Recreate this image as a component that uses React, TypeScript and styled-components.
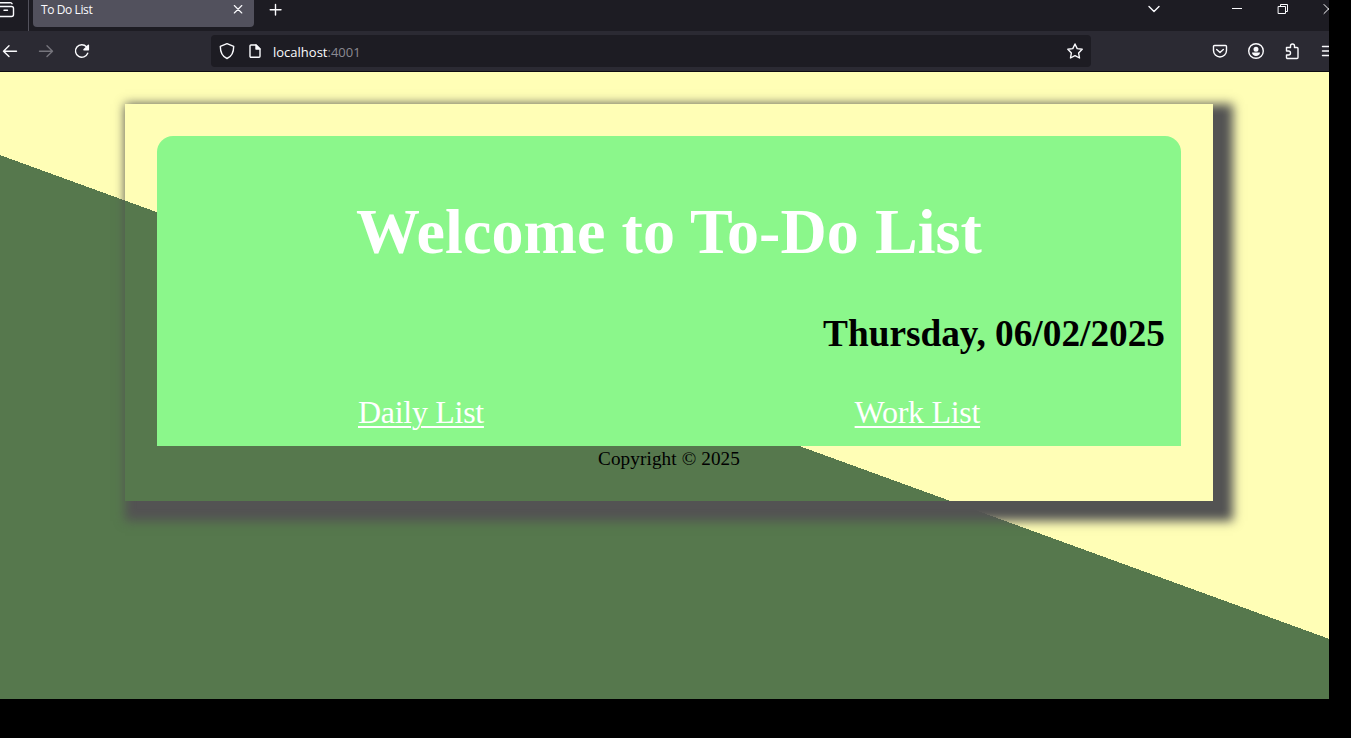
import React from "react";
import styled, { createGlobalStyle } from "styled-components";

const GlobalStyle = createGlobalStyle`
  * { box-sizing: border-box; }
  html, body { margin: 0; padding: 0; background: #000; overflow: hidden; }
`;

const Screen = styled.div`
  width: 1351px;
  height: 738px;
  background: #000;
  overflow: hidden;
`;

const Browser = styled.div`
  width: 1329px;
  height: 699px;
  display: flex;
  flex-direction: column;
  overflow: hidden;
`;

const TabBar = styled.div`
  height: 31px;
  flex: none;
  display: flex;
  align-items: flex-start;
  background: #1d1c23;
`;

const LibraryButton = styled.div`
  width: 29px;
  height: 31px;
  border-right: 1px solid #53525c;
  overflow: hidden;
`;

const Tab = styled.div`
  margin-left: 4px;
  width: 221px;
  height: 27px;
  padding: 0 9px 0 8px;
  display: flex;
  justify-content: space-between;
  background: #52515d;
  border-radius: 0 0 4px 4px;
`;

const TabTitle = styled.span`
  font: 12px/20px "Open Sans", "Noto Sans", sans-serif;
  letter-spacing: -0.4px;
  color: #fbfbfe;
`;

const Controls = styled.div`
  margin-left: auto;
  margin-right: -1px;
  display: flex;
`;

const Glyph = styled.svg<{ $ml?: number; $faded?: boolean }>`
  flex: none;
  display: block;
  margin-left: ${(p) => p.$ml ?? 0}px;
  fill: none;
  stroke: ${(p) => (p.$faded ? "#76757d" : "#fbfbfe")};
  stroke-width: 1.4;
  stroke-linecap: round;
  stroke-linejoin: round;
`;

const NavBar = styled.div`
  height: 41px;
  flex: none;
  display: flex;
  align-items: center;
  background: #2b2a33;
  border-bottom: 1px solid #0d0c11;
`;

const AddressBar = styled.div`
  width: 880px;
  height: 32px;
  flex: none;
  margin-left: 120px;
  display: flex;
  align-items: center;
  background: #1d1c23;
  border-radius: 4px;
`;

const Address = styled.span`
  margin-left: 9px;
  width: 793px;
  font: 13px/20px "Open Sans", "Noto Sans", sans-serif;
  padding-top: 2px;
  color: #fbfbfe;
`;

const Port = styled.span`
  color: #8b8a92;
`;

const Page = styled.main`
  flex: 1;
  padding: 32px 116px 0 125px;
  background: linear-gradient(20deg, #56784d 48.97%, #fffeb6 48.97%);
  font-family: "Liberation Serif", "Times New Roman", serif;
`;

const Card = styled.section`
  height: 397px;
  padding: 32px;
  box-shadow: 10px 10px 10px 10px #535353;
`;

const Panel = styled.div`
  height: 310px;
  padding: 59px 16px 0;
  background: #8bf78b;
  border-radius: 16px 16px 0 0;
`;

const Title = styled.h1`
  margin: 0;
  font-size: 64px;
  line-height: 74px;
  letter-spacing: 0.1px;
  text-align: center;
  white-space: nowrap;
  color: #fff;
`;

const Today = styled.h2`
  margin: 44px 0 0;
  font-size: 37.3px;
  line-height: 42px;
  text-align: right;
  color: #000;
`;

const Links = styled.nav`
  margin-top: 39px;
  padding: 0 185px;
  display: flex;
  justify-content: space-between;
`;

const ListLink = styled.a`
  font-size: 32px;
  line-height: 36px;
  letter-spacing: -0.3px;
  color: #fff;
  text-decoration: underline;
  text-decoration-thickness: 2px;
  text-underline-offset: 3px;
`;

const Copyright = styled.footer`
  font-size: 19.2px;
  line-height: 25px;
  letter-spacing: 0.1px;
  text-align: center;
  color: #000;
`;

export default function App() {
  return (
    <Screen>
      <GlobalStyle />
      <Browser>
        <TabBar>
          <LibraryButton>
            <Glyph width="16" height="20" viewBox="0 0 16 20">
              <path d="M-2 6.500H11.500a2 2 0 0 1 2 2V14.500a2 2 0 0 1-2 2H-2M-2 2.700H9.500a2.500 2.500 0 0 1 2.500 1M4 10.200H7.500" />
            </Glyph>
          </LibraryButton>
          <Tab>
            <TabTitle>To Do List</TabTitle>
            <Glyph width="14" height="20" viewBox="0 0 14 20">
              <path style={{ strokeWidth: 1.1 }} d="M3.300 5.500L10.800 13M10.800 5.500L3.300 13" />
            </Glyph>
          </Tab>
          <Glyph $ml={14} width="16" height="20" viewBox="0 0 16 20">
            <path d="M7.500 4.500V15M2.200 9.700H13" />
          </Glyph>
          <Controls>
            <Glyph width="16" height="20" viewBox="0 0 16 20">
              <path d="M3 6.500L8 11.500L13 6.500" />
            </Glyph>
            <Glyph $ml={69} width="14" height="20" viewBox="0 0 14 20" shapeRendering="crispEdges">
              <path style={{ strokeWidth: 1, strokeLinecap: "butt" }} d="M1 8.500H11" />
            </Glyph>
            <Glyph $ml={31} width="14" height="20" viewBox="0 0 14 20">
              <path style={{ strokeWidth: 1, strokeLinejoin: "miter" }} d="M2.500 6.500H9.500V13.500H2.500ZM4.500 6.500V4.500H11.500V11.500H9.500" />
            </Glyph>
            <Glyph $ml={32} width="8" height="20" viewBox="0 0 8 20">
              <path style={{ strokeWidth: 1 }} d="M2 4.500L11.500 14M2 13.500L11.500 4" />
            </Glyph>
          </Controls>
        </TabBar>
        <NavBar>
          <Glyph width="18" height="20" viewBox="0 0 18 20">
            <path d="M16.500 10.200H3.500M9 4.800L3.500 10.200L9 15.600" />
          </Glyph>
          <Glyph $ml={20} $faded width="18" height="20" viewBox="0 0 18 20">
            <path d="M1.500 10.200H14.500M9 4.800L14.500 10.200L9 15.600" />
          </Glyph>
          <Glyph $ml={17} width="18" height="20" viewBox="0 0 18 20">
            <path d="M14.700 12.200A6.300 6.300 0 1 1 13.500 5.800" />
            <path d="M15.400 4.200V8.700H10.900Z" fill="#fbfbfe" />
          </Glyph>
          <AddressBar>
            <Glyph $ml={7} width="18" height="20" viewBox="0 0 18 20">
              <path d="M9 2.700L15.700 5.300C15.700 11 13.500 15.700 9 17.500C4.500 15.700 2.300 11 2.300 5.300Z" />
            </Glyph>
            <Glyph $ml={10} width="18" height="20" viewBox="0 0 18 20">
              <path d="M5 4H10L14 8V15.300a1 1 0 0 1-1 1H5a1 1 0 0 1-1-1V5a1 1 0 0 1 1-1Z" />
              <path d="M10 4V8H14Z" fill="#fbfbfe" />
            </Glyph>
            <Address>localhost<Port>:4001</Port></Address>
            <Glyph width="18" height="20" viewBox="0 0 18 20">
              <path d="M9 3L11.200 7.600L16.200 8.300L12.600 11.900L13.500 17L9 14.600L4.500 17L5.400 11.900L1.800 8.300L6.800 7.600Z" />
            </Glyph>
          </AddressBar>
          <Glyph $ml={120} width="18" height="20" viewBox="0 0 18 20">
            <path d="M3.500 4.500H14.500a1 1 0 0 1 1 1V9.500a6.500 6.500 0 0 1-13 0V5.500a1 1 0 0 1 1-1ZM5.700 8.500L9 11.500L12.300 8.500" />
          </Glyph>
          <Glyph $ml={18} width="18" height="20" viewBox="0 0 18 20">
            <circle cx="9" cy="10" r="7.300" />
            <circle cx="9" cy="8.200" r="1.800" fill="#fbfbfe" />
            <path d="M5 11.500H13C13 16 5 16 5 11.500Z" fill="#fbfbfe" stroke="none" />
          </Glyph>
          <Glyph $ml={18} width="20" height="20" viewBox="0 0 20 20">
            <path d="M3.500 6.500H7.500V5a2 2 0 0 1 4 0V6.500H14a1 1 0 0 1 1 1V16.500a1 1 0 0 1-1 1H4.500a1 1 0 0 1-1-1V14H5.500a2 2 0 0 0 0-4H3.500Z" />
          </Glyph>
          <Glyph $ml={18} width="10" height="20" viewBox="0 0 10 20">
            <path d="M1.500 5.500H12M1.500 10H12M1.500 14.500H12" />
          </Glyph>
        </NavBar>
        <Page>
          <Card>
            <Panel>
              <Title>Welcome to To-Do List</Title>
              <Today>Thursday, 06/02/2025</Today>
              <Links>
                <ListLink>Daily List</ListLink>
                <ListLink>Work List</ListLink>
              </Links>
            </Panel>
            <Copyright>Copyright © 2025</Copyright>
          </Card>
        </Page>
      </Browser>
    </Screen>
  );
}
